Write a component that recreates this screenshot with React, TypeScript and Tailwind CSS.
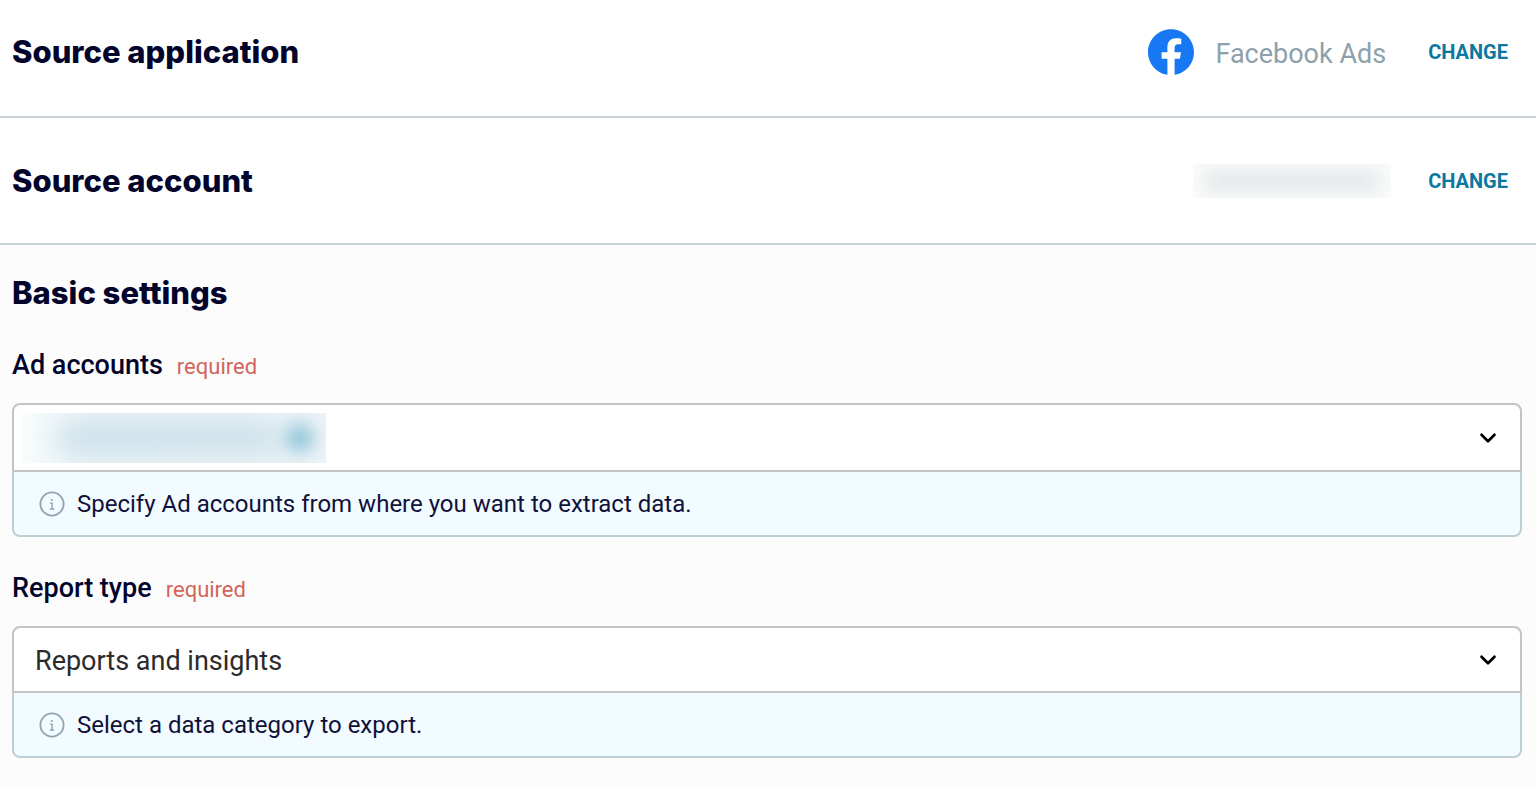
import React from 'react';
import { ChevronDown } from 'lucide-react';

const InfoIcon = () => (
  <svg viewBox="0 0 26 26" fill="none" className="size-[26px] shrink-0" aria-hidden="true">
    <circle cx="13" cy="13" r="11.6" stroke="#8fa5ad" strokeWidth="1.8" />
    <circle cx="12.8" cy="9" r="1.1" fill="#8fa5ad" />
    <path d="M11.2 12.2h1.9v5.6M10.9 18h4.4" stroke="#8fa5ad" strokeWidth="1.4" />
  </svg>
);

const FacebookLogo = () => (
  <svg viewBox="0 0 24 24" className="size-[46px] shrink-0" aria-hidden="true">
    <path
      fill="#1877f2"
      d="M24 12.073c0-6.627-5.373-12-12-12s-12 5.373-12 12c0 5.99 4.388 10.954 10.125 11.854v-8.385H7.078v-3.47h3.047V9.43c0-3.007 1.792-4.669 4.533-4.669 1.312 0 2.686.235 2.686.235v2.953H15.83c-1.491 0-1.956.925-1.956 1.874v2.25h3.328l-.532 3.47h-2.796v8.385C19.612 23.027 24 18.062 24 12.073z"
    />
  </svg>
);

const Heading = ({ children }: { children: React.ReactNode }) => (
  <h2 className="font-[Inter,sans-serif] text-[31px] leading-10 font-extrabold text-[#03042b]">{children}</h2>
);

const ChangeButton = ({ label }: { label: string }) => (
  <button type="button" aria-label={label} className="cursor-pointer text-xl leading-6 font-bold text-[#0b789f]">
    CHANGE
  </button>
);

interface FieldProps {
  id: string;
  label: string;
  hint: string;
  children: React.ReactNode;
}

const Field = ({ id, label, hint, children }: FieldProps) => (
  <div>
    <div className="flex items-baseline gap-[14px]">
      <label htmlFor={id} className="text-[27px] leading-9 font-medium text-[#03042b]">
        {label}
      </label>
      <span className="text-[22px] leading-7 text-[#d1655a]">required</span>
    </div>
    <div className="mt-5">
      <div className="relative">
        {children}
        <ChevronDown
          className="pointer-events-none absolute top-1/2 right-[21px] size-[26px] -translate-y-1/2 text-black"
          strokeWidth={2.5}
        />
      </div>
      <div
        id={`${id}-hint`}
        className="flex items-center gap-3 rounded-b-lg border-2 border-t-0 border-[#bdced5] bg-[#f2fbff] px-[25px] pt-[17px] pb-4 text-2xl leading-[30px] text-[#10113a]"
      >
        <InfoIcon />
        <p>{hint}</p>
      </div>
    </div>
  </div>
);

export default function App() {
  return (
    <main className="min-h-screen bg-[#fcfcfc] font-[Roboto,sans-serif]">
      <section className="flex items-center justify-between border-b-2 border-[#c9d3d8] bg-white pt-[29px] pr-7 pb-[41px] pl-3">
        <Heading>Source application</Heading>
        <div className="flex items-center">
          <FacebookLogo />
          <span className="ml-[21px] pt-1 text-[27px] leading-9 text-[#8ca1aa]">Facebook Ads</span>
          <div className="ml-[42px] flex">
            <ChangeButton label="Change source application" />
          </div>
        </div>
      </section>

      <section className="flex items-center justify-between border-b-2 border-[#c9d3d8] bg-white pt-[43px] pr-7 pb-[42px] pl-3">
        <Heading>Source account</Heading>
        <div className="flex items-center">
          <div className="flex h-[34px] w-[198px] items-center justify-center overflow-hidden bg-[#fafbfb]">
            <div className="h-5 w-[172px] bg-[#e0e6e8] blur-[9px]" />
          </div>
          <div className="ml-[37px] flex">
            <ChangeButton label="Change source account" />
          </div>
        </div>
      </section>

      <section className="pt-7 pr-[14px] pb-7 pl-3">
        <Heading>Basic settings</Heading>
        <div className="mt-[34px] flex flex-col gap-[33px]">
          <Field id="ad-accounts" label="Ad accounts" hint="Specify Ad accounts from where you want to extract data.">
            <button
              id="ad-accounts"
              type="button"
              aria-haspopup="listbox"
              aria-describedby="ad-accounts-hint"
              className="flex h-[69px] w-full items-center rounded-t-lg border-2 border-[#c4c4c4] bg-white px-2"
            >
              <span className="flex h-[50px] w-[304px] items-center overflow-hidden bg-linear-to-r from-[#f9fcfd] via-[#e8f2f6] via-25% to-[#ecf4f7] pl-9">
                <span className="h-6 w-[220px] shrink-0 bg-[#c4dce6] blur-[14px]" />
                <span className="ml-2 size-7 shrink-0 rounded-full bg-[#8cc2d6] blur-[9px]" />
              </span>
            </button>
          </Field>
          <Field id="report-type" label="Report type" hint="Select a data category to export.">
            <select
              id="report-type"
              aria-describedby="report-type-hint"
              className="block h-[67px] w-full appearance-none rounded-t-lg border-2 border-[#c4c4c4] bg-white px-[21px] pt-1 text-[27px] text-[#2b2b2b]"
            >
              <option>Reports and insights</option>
            </select>
          </Field>
        </div>
      </section>
    </main>
  );
}
